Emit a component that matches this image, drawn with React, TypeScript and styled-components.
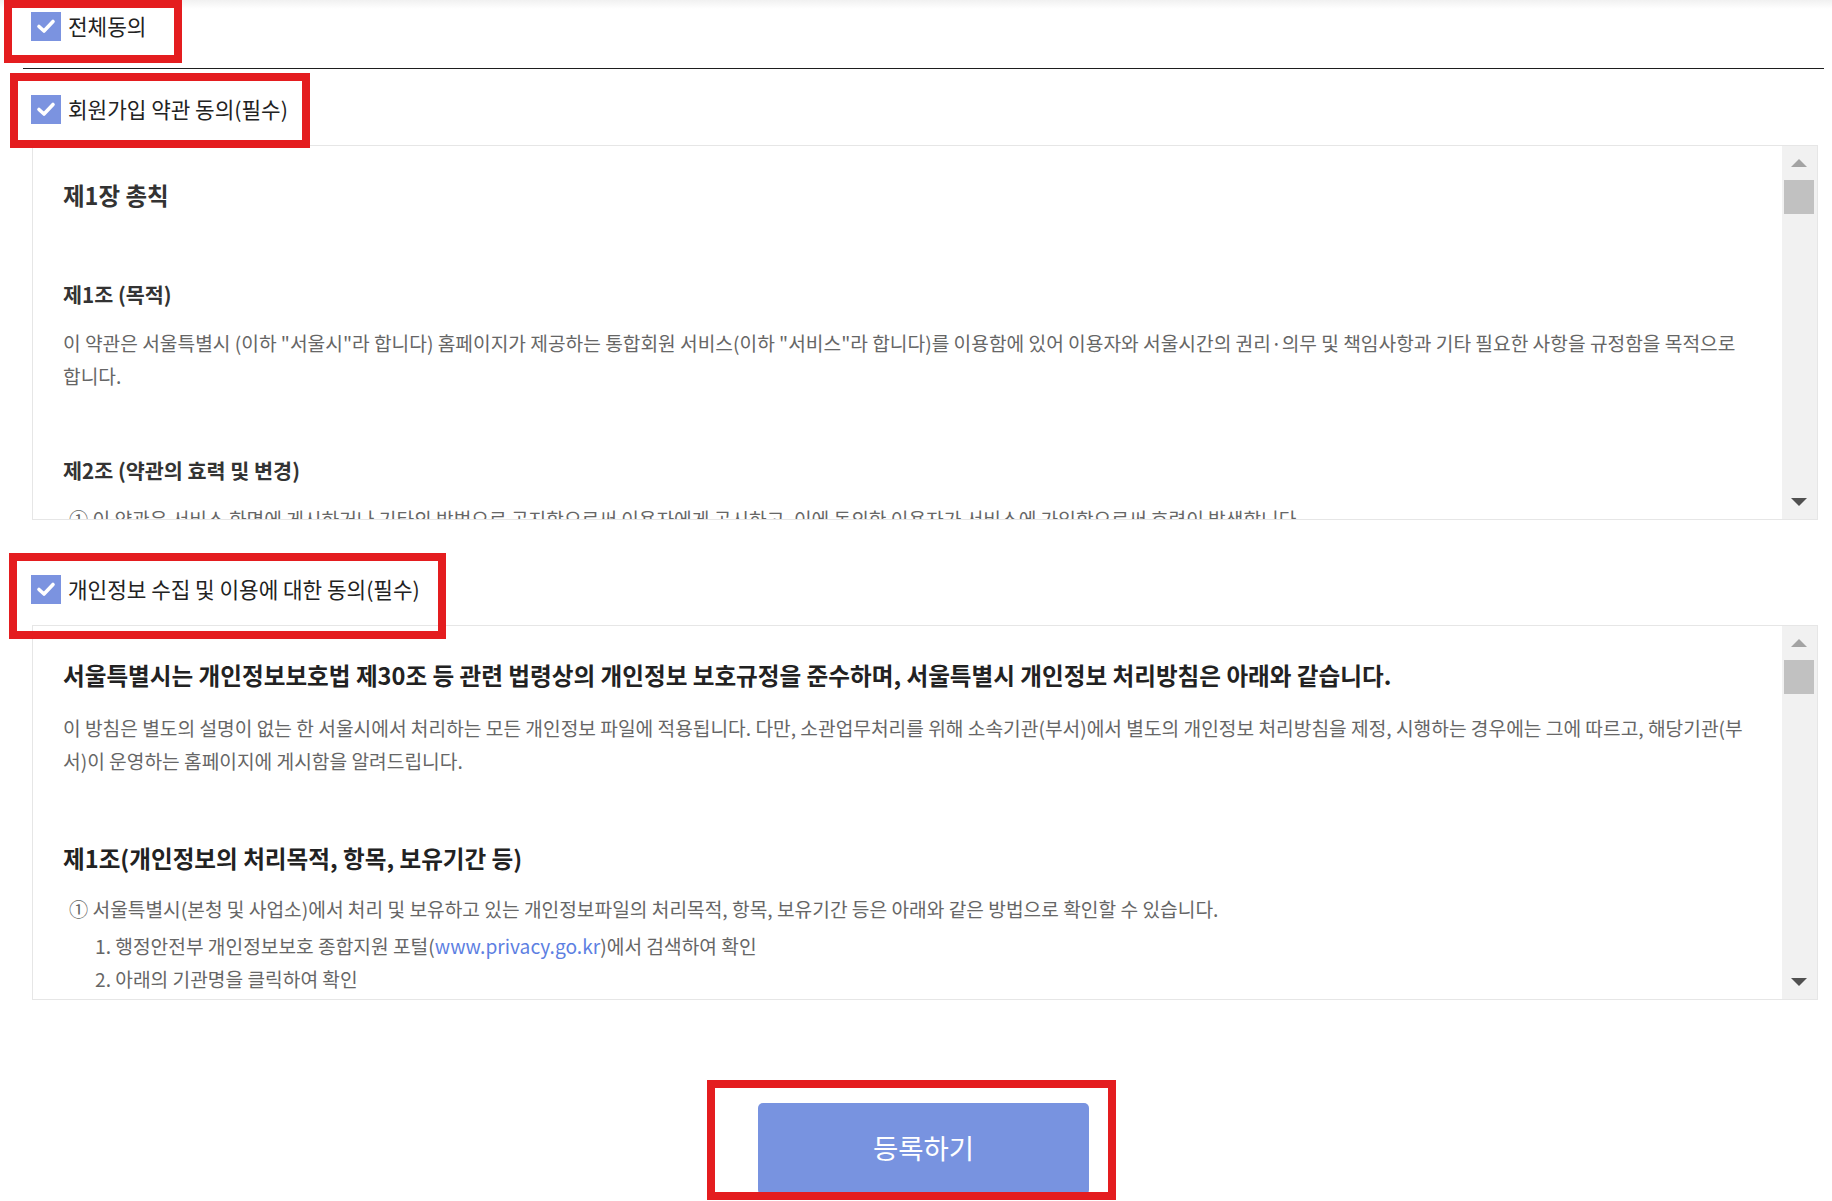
import styled, { createGlobalStyle } from 'styled-components';

const GlobalStyle = createGlobalStyle`
  html, body {
    margin: 0;
    padding: 0;
  }
  body {
    width: 1832px;
    height: 1201px;
    overflow: hidden;
    background: linear-gradient(#f1f1f1, #ffffff 9px) no-repeat;
    font-family: "Noto Sans CJK KR", "Noto Sans", sans-serif;
    color: #222;
  }
  * {
    box-sizing: border-box;
  }
`;

function Check() {
  return (
    <svg width="20" height="16" viewBox="0 0 20 16">
      <polyline
        points="3,8.5 8,13 17,3.5"
        fill="none"
        stroke="#fff"
        strokeWidth="3.6"
        strokeLinecap="round"
        strokeLinejoin="round"
      />
    </svg>
  );
}

function Scroll() {
  return (
    <ScrollBar>
      <ArrowCell>
        <Arrow $up />
      </ArrowCell>
      <Thumb />
      <Track />
      <ArrowCell>
        <Arrow />
      </ArrowCell>
    </ScrollBar>
  );
}

function App() {
  return (
    <Page>
      <GlobalStyle />
      <AgreeRow $h={52}>
        <Highlight $x={-19} $y={0} $w={178} $h={63} />
        <CheckBox>
          <Check />
        </CheckBox>
        <Label>전체동의</Label>
      </AgreeRow>
      <Divider />

      <AgreeRow $h={72} $top={4}>
        <Highlight $x={-13} $y={0} $w={300} $h={75} />
        <CheckBox>
          <Check />
        </CheckBox>
        <Label>회원가입 약관 동의(필수)</Label>
      </AgreeRow>
      <TermsBox>
        <TermsText>
          <ChapterTitle>제1장 총칙</ChapterTitle>
          <ArticleTitle $top={67}>제1조 (목적)</ArticleTitle>
          <Para>
            이 약관은 서울특별시 (이하 "서울시"라 합니다) 홈페이지가 제공하는 통합회원
            서비스(이하 "서비스"라 합니다)를 이용함에 있어 이용자와 서울시간의 권리·의무 및
            책임사항과 기타 필요한 사항을 규정함을 목적으로 합니다.
          </Para>
          <ArticleTitle $top={62}>제2조 (약관의 효력 및 변경)</ArticleTitle>
          <Para $indent={6}>
            ① 이 약관은 서비스 화면에 게시하거나 기타의 방법으로 공지함으로써 이용자에게
            공시하고, 이에 동의한 이용자가 서비스에 가입함으로써 효력이 발생합니다.
          </Para>
          <Para $indent={6}>
            ② 서울시는 필요하다고 인정되는 경우 이 약관을 변경할 수 있으며, 변경된 약관은
            제1항과 같은 방법으로 공지합니다.
          </Para>
        </TermsText>
        <Scroll />
      </TermsBox>

      <AgreeRow $h={72} $top={33}>
        <Highlight $x={-14} $y={0} $w={437} $h={86} />
        <CheckBox>
          <Check />
        </CheckBox>
        <Label>개인정보 수집 및 이용에 대한 동의(필수)</Label>
      </AgreeRow>
      <TermsBox>
        <TermsText>
          <PolicyTitle>
            서울특별시는 개인정보보호법 제30조 등 관련 법령상의 개인정보 보호규정을 준수하며,
            서울특별시 개인정보 처리방침은 아래와 같습니다.
          </PolicyTitle>
          <Para>
            이 방침은 별도의 설명이 없는 한 서울시에서 처리하는 모든 개인정보 파일에
            적용됩니다. 다만, 소관업무처리를 위해 소속기관(부서)에서 별도의 개인정보 처리방침을
            제정, 시행하는 경우에는 그에 따르고, 해당기관(부서)이 운영하는 홈페이지에 게시함을
            알려드립니다.
          </Para>
          <PolicyTitle $top={64} $bottom={18}>
            제1조(개인정보의 처리목적, 항목, 보유기간 등)
          </PolicyTitle>
          <Para $indent={6}>
            ① 서울특별시(본청 및 사업소)에서 처리 및 보유하고 있는 개인정보파일의 처리목적,
            항목, 보유기간 등은 아래와 같은 방법으로 확인할 수 있습니다.
          </Para>
          <StepList>
            <li>
              1. 행정안전부 개인정보보호 종합지원 포털(<a>www.privacy.go.kr</a>)에서 검색하여
              확인
            </li>
            <li>2. 아래의 기관명을 클릭하여 확인</li>
          </StepList>
        </TermsText>
        <Scroll />
      </TermsBox>

      <SubmitArea>
        <SubmitWrap>
          <Highlight $x={-51} $y={-23} $w={409} $h={120} />
          <SubmitButton type="button">등록하기</SubmitButton>
        </SubmitWrap>
      </SubmitArea>
    </Page>
  );
}

export default App;

const Page = styled.div`
  padding: 0 8px 0 23px;
`;

const AgreeRow = styled.div<{ $h: number; $top?: number }>`
  position: relative;
  display: flex;
  align-items: center;
  height: ${(p) => p.$h}px;
  margin-top: ${(p) => p.$top ?? 0}px;
  padding-left: 8px;
`;

const Highlight = styled.span<{ $x: number; $y: number; $w: number; $h: number }>`
  position: absolute;
  left: ${(p) => p.$x}px;
  top: ${(p) => p.$y}px;
  width: ${(p) => p.$w}px;
  height: ${(p) => p.$h}px;
  border: 8px solid #e41d1f;
  pointer-events: none;
  z-index: 2;
`;

const CheckBox = styled.span`
  display: flex;
  align-items: center;
  justify-content: center;
  flex-shrink: 0;
  width: 30px;
  height: 29px;
  background: #7b93e0;
`;

const Label = styled.span`
  margin-left: 7px;
  font-size: 21.3px;
  line-height: 30px;
  color: #222;
`;

const Divider = styled.hr`
  margin: 16px 0 0;
  height: 1px;
  border: 0;
  background: #1e1e1e;
`;

const TermsBox = styled.div`
  display: flex;
  height: 375px;
  margin: 0 6px 0 9px;
  border: 1px solid #e6e6e6;
`;

const TermsText = styled.div`
  flex: 1;
  min-width: 0;
  overflow: hidden;
  padding: 33px 31px 0 30px;
`;

const ChapterTitle = styled.h3`
  margin: 0;
  font-size: 23.5px;
  font-weight: 700;
  line-height: 33px;
  color: #333;
`;

const ArticleTitle = styled.h4<{ $top: number }>`
  margin: ${(p) => p.$top}px 0 18px;
  font-size: 20.7px;
  font-weight: 700;
  line-height: 30px;
  color: #333;
`;

const PolicyTitle = styled.h3<{ $top?: number; $bottom?: number }>`
  margin: ${(p) => p.$top ?? 0}px 0 ${(p) => p.$bottom ?? 20}px;
  font-size: 23.6px;
  font-weight: 700;
  line-height: 33px;
  color: #222;
`;

const Para = styled.p<{ $indent?: number }>`
  margin: 0;
  padding-left: ${(p) => p.$indent ?? 0}px;
  font-size: 19.2px;
  line-height: 33px;
  color: #666;
`;

const StepList = styled.ul`
  list-style: none;
  margin: 4px 0 0;
  padding-left: 32px;
  font-size: 19.2px;
  line-height: 33px;
  color: #666;
  a {
    color: #5d7fe2;
    text-decoration: none;
  }
`;

const ScrollBar = styled.div`
  display: flex;
  flex-direction: column;
  flex-shrink: 0;
  width: 35px;
  background: #f1f1f1;
`;

const ArrowCell = styled.div`
  display: flex;
  align-items: center;
  justify-content: center;
  height: 34px;
  padding-right: 1px;
`;

const Arrow = styled.span<{ $up?: boolean }>`
  width: 0;
  height: 0;
  border-left: 8px solid transparent;
  border-right: 8px solid transparent;
  ${(p) =>
    p.$up ? 'border-bottom: 8px solid #a3a3a3;' : 'border-top: 8px solid #505050;'}
`;

const Thumb = styled.div`
  height: 34px;
  margin: 0 3px 0 2px;
  background: #c1c1c1;
`;

const Track = styled.div`
  flex: 1;
`;

const SubmitArea = styled.div`
  display: flex;
  justify-content: center;
  margin-top: 103px;
`;

const SubmitWrap = styled.div`
  position: relative;
`;

const SubmitButton = styled.button`
  width: 331px;
  height: 92px;
  padding: 0 0 4px;
  border: 0;
  border-radius: 5px;
  background: #7893e0;
  color: #fff;
  font-family: "Noto Sans CJK KR", "Noto Sans", sans-serif;
  font-size: 27.5px;
  cursor: pointer;
`;
